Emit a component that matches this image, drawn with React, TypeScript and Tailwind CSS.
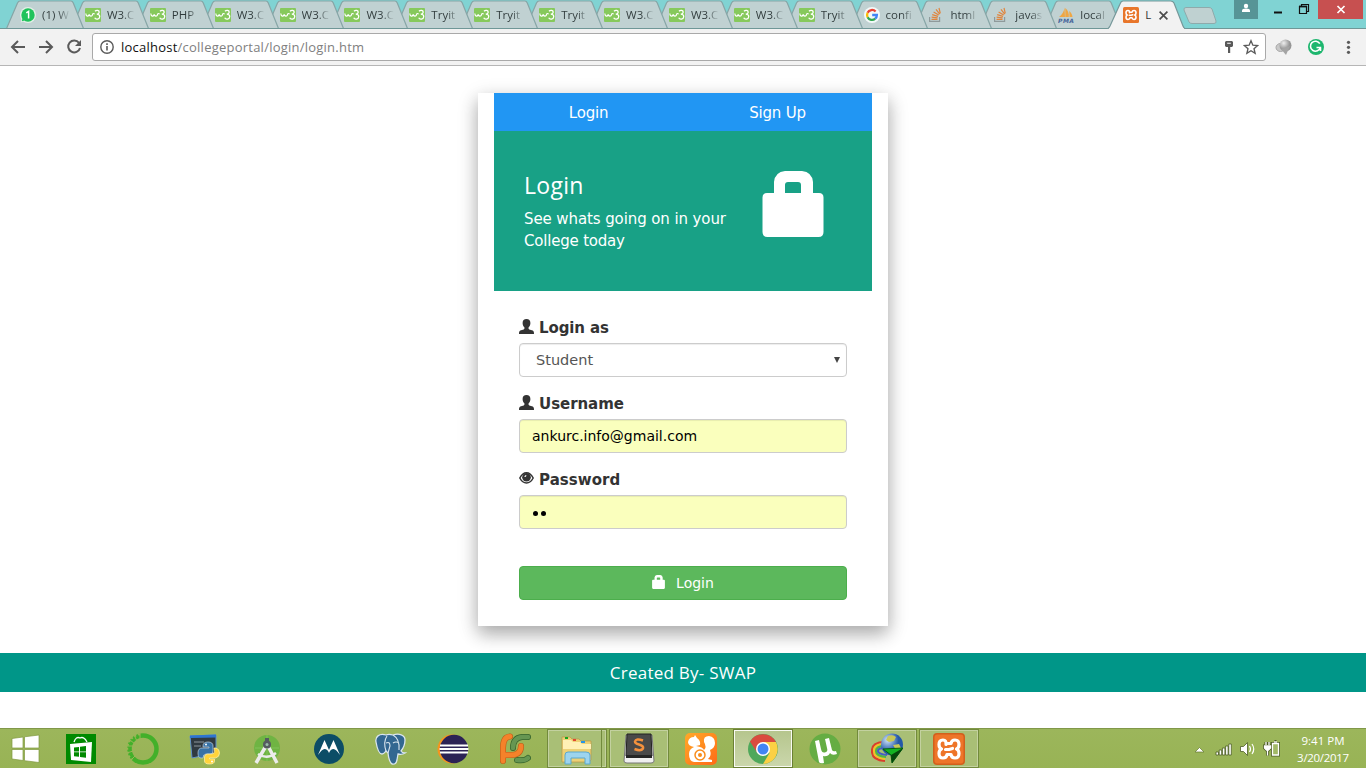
import React from "react";

type TabKind = "wa" | "w3" | "google" | "so" | "pma";

const tabs: { kind: TabKind; label: string }[] = [
  { kind: "wa", label: "(1) W" },
  { kind: "w3", label: "W3.C" },
  { kind: "w3", label: "PHP" },
  { kind: "w3", label: "W3.C" },
  { kind: "w3", label: "W3.C" },
  { kind: "w3", label: "W3.C" },
  { kind: "w3", label: "Tryit" },
  { kind: "w3", label: "Tryit" },
  { kind: "w3", label: "Tryit" },
  { kind: "w3", label: "W3.C" },
  { kind: "w3", label: "W3.C" },
  { kind: "w3", label: "W3.C" },
  { kind: "w3", label: "Tryit" },
  { kind: "google", label: "confi" },
  { kind: "so", label: "html" },
  { kind: "so", label: "javas" },
  { kind: "pma", label: "local" },
];

function Favicon({ kind }: { kind: TabKind }) {
  return (
    <svg viewBox="0 0 16 16" className="h-4 w-4 shrink-0">
      {kind === "wa" && (
        <>
          <circle cx="8" cy="8" r="8" fill="#e3f0e8" />
          <path d="M.6 15.4 2 11l3 3z" fill="#e3f0e8" />
          <circle cx="8" cy="8" r="6.7" fill="#20c35c" />
          <path d="M1.8 14.3 2.6 11l2 2.4z" fill="#20c35c" />
          <path d="M6.3 5.8 8.6 4.4V11.6" fill="none" stroke="#fff" strokeWidth="1.5" />
        </>
      )}
      {kind === "w3" && (
        <>
          <rect y="1" width="16" height="14" rx="1" fill="#86c95c" />
          <path
            d="M.8 6.500C1 9.800 3.700 9.800 4.200 7.500 4.800 9.800 7.400 9.500 7.600 7.200 8 6.200 9 6.300 9.500 7.200"
            fill="none"
            stroke="#fff"
            strokeWidth="1.200"
          />
          <path
            d="M10 4.300c1.500-1.600 4.300-1 4.200 1-.1 1.300-1.300 1.800-2.400 1.900 1.600 0 3 .8 2.900 2.500-.2 2.900-4 3.100-5 1"
            fill="none"
            stroke="#fff"
            strokeWidth="1.300"
          />
        </>
      )}
      {kind === "google" && (
        <>
          <circle cx="8" cy="8" r="8" fill="#f3f9f9" />
          <g fill="none" strokeWidth="2.300">
            <path d="M11.600 4.500A4.900 4.900 0 0 0 3.600 5.800" stroke="#ea4335" />
            <path d="M3.600 5.800a4.900 4.900 0 0 0 0 4.400" stroke="#fbbc05" />
            <path d="M3.600 10.200a4.900 4.900 0 0 0 7.600 1.500" stroke="#34a853" />
            <path d="M11.200 11.700A4.900 4.900 0 0 0 12.900 8H8.200" stroke="#4285f4" />
          </g>
        </>
      )}
      {kind === "so" && (
        <>
          <path d="M1.600 10v4.400h10V10" fill="none" stroke="#8f9a9b" strokeWidth="1.200" />
          <path
            d="M3.500 12.400h6M3.600 10.200l6 .7M4.200 7.600l5.800 1.700M5.600 4.900l5.100 3.200M8 2.300l3.700 4.800M11 1l1.300 5.400"
            fill="none"
            stroke="#e0853d"
            strokeWidth="1.200"
          />
        </>
      )}
      {kind === "pma" && (
        <>
          <path d="M6.500.5C6 4.500 4 8 1 10h6zM7.300 1c2.500 2 4 5.500 3.500 9H7.300zM11.300 4c1.800 1.500 3 3.500 3.200 6h-3z" fill="#efa643" />
          <text x="0" y="15.700" textLength="16" fontSize="6" fontWeight="bold" fontStyle="italic" fill="#46659a" className="font-['DejaVu_Sans',sans-serif]">
            PMA
          </text>
        </>
      )}
    </svg>
  );
}

function XamppMark() {
  return (
    <g fill="none" stroke="#fff" strokeWidth="3.200" strokeLinejoin="round" strokeLinecap="round">
      <path d="M13 11.500Q13.500 7 10 7 6 7 6 11.500 6 15 8.500 16 6 17 6 20.500 6 25 10 25 13.500 25 14 21.500H18Q18.500 25 22 25 26 25 26 20.500 26 17 23.500 16 26 15 26 11.500 26 7 22 7 18.500 7 18 10.500H13.500" />
      <path d="M12.500 16.500H16L19.500 15.500" />
    </g>
  );
}

function Tab({ kind, label, layer }: { kind: TabKind; label: string; layer: number }) {
  return (
    <div className="relative flex h-[29px] w-[64.9px] shrink-0 items-center" style={{ zIndex: layer }}>
      <svg viewBox="0 0 80 29" className="absolute left-[-14px] top-0 h-[29px] w-[80px]">
        <path d="M0.500 28.500 11.500 3Q12.500 1 14 1H65Q66.500 1 67.300 3L77.500 28.500" fill="#c0d1d2" stroke="#86a5a6" strokeWidth="1.200" />
      </svg>
      <div className="relative flex items-center gap-[6px] pt-px">
        <Favicon kind={kind} />
        <div className="w-[28px] whitespace-nowrap bg-linear-to-r from-[#2f3a3b] from-55% to-[#c0d1d2] bg-clip-text font-['Open_Sans',sans-serif] text-[11.500px] leading-4 text-transparent">
          {label}
        </div>
      </div>
    </div>
  );
}

function TabStrip() {
  return (
    <div className="relative z-0 flex h-[29px] bg-[#80d3d3] pl-5">
      {tabs.map((t, i) => (
        <Tab key={i} kind={t.kind} label={t.label} layer={tabs.length - i} />
      ))}
      <div className="absolute bottom-0 left-0 z-20 h-px w-full bg-[#6f9797]" />
      <div className="relative z-30 flex h-[29px] w-[61px] shrink-0 items-center">
        <svg viewBox="0 0 80 29" className="absolute left-[-16px] top-0 h-[29px] w-[80px]">
          <path d="M0 29.500Q2 28 3 26L13 4Q14 1 16 1H63.500Q66 1 67 3L76 26Q77 28.500 79 29.500" fill="#f2f2f2" stroke="#76989a" strokeWidth="1.200" />
          <path d="M2 29h75" stroke="#f2f2f2" strokeWidth="1.500" />
        </svg>
        <div className="relative flex items-center pt-px">
          <svg viewBox="0 0 32 32" className="h-4 w-4">
            <rect width="32" height="32" rx="3" fill="#e8762a" />
            <XamppMark />
          </svg>
          <span className="ml-[6px] w-[12px] font-['Open_Sans',sans-serif] text-[11.500px] leading-4 text-[#333]">L</span>
          <svg viewBox="0 0 8 8" className="ml-[2px] h-[9px] w-[9px]">
            <path d="M.5.5l7 7m0-7l-7 7" stroke="#4c4c4c" strokeWidth="1.500" />
          </svg>
        </div>
      </div>
      <svg viewBox="0 0 34 18" className="ml-[-1px] mt-[7px] h-[18px] w-[34px] shrink-0">
        <path d="M3 .5H26Q28 .5 29 2L33 14Q33.500 16.500 31 16.500H9Q7 16.500 6 15L1 3Q.5.500 3 .5z" fill="#bfd1d1" stroke="#8eaaab" />
      </svg>
      <div className="ml-auto flex h-[19px] shrink-0">
        <svg viewBox="0 0 24 19" className="h-[19px] w-[24px] bg-[#579496]">
          <circle cx="12" cy="6" r="2.200" fill="#fff" />
          <path d="M8 12v-1.500q0-2 4-2t4 2V12z" fill="#fff" />
        </svg>
        <svg viewBox="0 0 60 19" className="h-[19px] w-[60px]">
          <path d="M16 12.500h8" stroke="#111" strokeWidth="2" />
          <path d="M41.500 6.500h7v7h-7zM43.500 6V4.500h7v7H49" fill="none" stroke="#111" strokeWidth="1.200" />
          <path d="M41 6.500h8" stroke="#111" strokeWidth="1.800" />
        </svg>
        <svg viewBox="0 0 45 19" className="mr-[3px] h-[19px] w-[45px] bg-[#c75050]">
          <path d="M19.500 6l7 7m0-7l-7 7" stroke="#fff" strokeWidth="1.700" />
        </svg>
      </div>
    </div>
  );
}

function Toolbar() {
  return (
    <div className="flex h-[37px] items-center border-b border-[#b6b6b6] bg-[#f2f2f2]">
      <svg viewBox="0 0 92 36" className="h-9 w-[92px] shrink-0" fill="none" stroke="#5a5a5a" strokeWidth="2">
        <path d="M25 18H12.500M18 12l-6 6 6 6M39 18h12.500M46 12l6 6-6 6" />
        <path d="M79 13.800a6 6 0 1 0 1 5.200" />
        <path d="M81 11v6h-6z" fill="#5a5a5a" stroke="none" />
      </svg>
      <div className="flex h-[28px] w-[1174px] shrink-0 items-center rounded-[3px] border border-[#a9a9a9] bg-white pl-[7px] pr-[6px]">
        <svg viewBox="0 0 14 14" className="h-[14px] w-[14px]">
          <circle cx="7" cy="7" r="6.200" fill="none" stroke="#5a5a5a" strokeWidth="1.400" />
          <path d="M7 6v4.500M7 3.300V5" stroke="#5a5a5a" strokeWidth="1.600" />
        </svg>
        <span className="ml-[7px] whitespace-nowrap font-['Open_Sans',sans-serif] text-[13px] leading-5 tracking-[0.235px] text-[#808080]">
          <span className="text-[#111]">localhost</span>/collegeportal/login/login.htm
        </span>
        <svg viewBox="0 0 8 12" className="ml-auto h-[12px] w-[8px]">
          <path fillRule="evenodd" d="M1 0h6l1 1v4L7 6H5.200v6H3V6H1L0 5V1zM2.200 1.800v1h3.600v-1z" fill="#5a5a5a" />
        </svg>
        <svg viewBox="0 0 24 24" className="ml-[10px] h-[16px] w-[16px]">
          <path d="M12 2.500l2.800 6.700 7.200.6-5.500 4.700 1.700 7L12 17.700l-6.200 3.800 1.700-7L2 9.800l7.200-.6z" fill="none" stroke="#5a5a5a" strokeWidth="2" />
        </svg>
      </div>
      <svg viewBox="0 0 100 36" className="h-9 w-[100px] shrink-0">
        <defs>
          <radialGradient id="globe" cx=".35" cy=".3">
            <stop offset="0" stopColor="#eee" />
            <stop offset="1" stopColor="#969696" />
          </radialGradient>
        </defs>
        <ellipse cx="14.500" cy="18.500" rx="4.500" ry="4" fill="#c8c8c8" stroke="#a8a8a8" />
        <circle cx="19.500" cy="16.500" r="6" fill="url(#globe)" />
        <path d="M15 20l9-3-4 9z" fill="#a4a4a4" />
        <circle cx="50" cy="18" r="8" fill="#1db66e" />
        <path d="M53.800 14.700A5 5 0 1 0 54.300 18.500H50.500M54.500 18.500V22" fill="none" stroke="#fff" strokeWidth="1.600" />
        <g fill="#5a5a5a">
          <circle cx="82.500" cy="13.300" r="1.600" />
          <circle cx="82.500" cy="18.300" r="1.600" />
          <circle cx="82.500" cy="23.300" r="1.600" />
        </g>
      </svg>
    </div>
  );
}

function LockIcon({ className }: { className: string }) {
  return (
    <svg viewBox="0 0 62 66" className={className}>
      <path
        fillRule="evenodd"
        fill="#fff"
        d="M12 22V11Q13 1 23 0H40Q50 1 51 11V22H57Q61.500 22 61.500 26.500V61Q61.500 66 56.500 66H5.500Q.5 66 .5 61V26.500Q.5 22 5 22zM23 22H39V14Q39 11 36 11H26Q23 11 23 14z"
      />
    </svg>
  );
}

function UserIcon() {
  return (
    <svg viewBox="0 0 15 15" className="mb-[2px] h-[15px] w-[15px]">
      <path d="M7.500 0C10 0 11.400 1.600 11.400 4c0 1.800-.7 3.500-1.700 4.300-.4.800-.2 1.700.6 2.100l3.400 1.200c1 .5 1.300 1.400 1.300 3.400H0c0-2 .3-2.900 1.300-3.400l3.400-1.200c.8-.4 1-1.300.6-2.100C4.300 7.500 3.600 5.800 3.600 4 3.600 1.600 5 0 7.500 0z" fill="#333" />
    </svg>
  );
}

function EyeIcon() {
  return (
    <svg viewBox="0 0 15 12" className="mb-[2px] h-[12px] w-[15px]">
      <path d="M.8 6Q3.500.8 7.500.8T14.200 6Q11.500 11 7.500 11T.8 6z" fill="#fff" stroke="#333" strokeWidth="1.500" />
      <circle cx="7.500" cy="5.200" r="4.300" fill="#333" />
      <path d="M5.300 5Q5.600 3 7.400 3L7 4.800z" fill="#fff" />
    </svg>
  );
}

function Label({ icon, text }: { icon: React.ReactNode; text: React.ReactNode }) {
  return (
    <div className="mb-[5px] flex h-[22px] items-center gap-[5px] whitespace-nowrap font-['DejaVu_Sans',sans-serif] text-[15px] font-bold leading-[22px] text-[#333]">
      {icon}
      {text}
    </div>
  );
}

function LoginCard() {
  return (
    <div className="mx-auto mt-[27px] h-[533px] w-[410px] bg-white px-4 font-['DejaVu_Sans',sans-serif] text-[15px] shadow-[0_8px_16px_0_rgba(0,0,0,0.2),0_6px_20px_0_rgba(0,0,0,0.19)]">
      <div className="grid h-[38px] grid-cols-2 items-center bg-[#2196f3] pt-[2px] text-center leading-[22px] text-white">
        <span className="tracking-[-0.200px]">Login</span>
        <span className="tracking-[-0.200px]">Sign Up</span>
      </div>
      <div className="flex h-[160px] bg-[#18a186] px-[30px] pt-[40px] text-white">
        <div className="w-[238px]">
          <h3 className="mt-[-1px] whitespace-nowrap font-['Open_Sans',sans-serif] text-[23px] leading-[30px] tracking-[0.300px]">Login</h3>
          <p className="mt-[8px] whitespace-nowrap leading-[22px] tracking-[-0.100px]">
            See whats going on in your
            <br />
            <span className="tracking-[-0.200px]">College today</span>
          </p>
        </div>
        <LockIcon className="h-[66px] w-[62px] shrink-0" />
      </div>
      <div className="px-[25px] pt-[25px]">
        <Label icon={<UserIcon />} text={<span className="pt-[2px] tracking-[-0.100px]">Login as</span>} />
        <div className="mb-[15px] flex h-[34px] items-center justify-between rounded-[4px] border border-[#ccc] bg-white pl-4 pr-[6px] text-[#555] shadow-[inset_0_1px_1px_rgba(0,0,0,0.075)]">
          <span className="pt-[2px] text-[14.500px]">Student</span>
          <svg viewBox="0 0 6 6" className="h-[6px] w-[6px]">
            <path d="M0 0h6L3 6z" fill="#444" />
          </svg>
        </div>
        <Label icon={<UserIcon />} text={<span className="pt-[2px] tracking-[-0.050px]">Username</span>} />
        <div className="mb-[15px] flex h-[34px] items-center rounded-[4px] border border-[#ccc] bg-[#faffbd] px-3 pt-[1px] text-[14px] text-black shadow-[inset_0_1px_1px_rgba(0,0,0,0.075)]">
          ankurc.info@gmail.com
        </div>
        <Label icon={<EyeIcon />} text={<span className="pt-[2px] tracking-[0.050px]">Password</span>} />
        <div className="flex h-[34px] items-center gap-[3px] rounded-[4px] border border-[#ccc] bg-[#faffbd] pl-[13px] pt-[3px] shadow-[inset_0_1px_1px_rgba(0,0,0,0.075)]">
          <span className="h-[5px] w-[5px] rounded-full bg-black" />
          <span className="h-[5px] w-[5px] rounded-full bg-black" />
        </div>
        <div className="mt-[37px] flex h-[34px] items-center justify-center gap-[11px] rounded-[4px] border border-[#4cae4c] bg-[#5cb85c] text-[14px] text-white">
          <LockIcon className="mb-[2px] h-[14px] w-[13px]" />
          Login
        </div>
      </div>
    </div>
  );
}

const taskIcons: { box?: "normal" | "active" | "stack"; art: React.ReactNode }[] = [
  {
    art: (
      <>
        <rect x="1" y="1" width="30" height="30" fill="#008a00" />
        <path d="M9 9Q11 3 15 5Q19 3 22 9" fill="none" stroke="#fff" strokeWidth="1.300" />
        <path d="M5 11l22-2-1 20-20-2z" fill="#fff" />
        <path d="M9 14.500l5-.6v4.500H9zM15 13.800l6-.8v5.400h-6zM9 19.300h5v4.500l-5-.6zM15 19.300h6v5.500l-6-.8z" fill="#008a00" />
      </>
    ),
  },
  {
    art: (
      <>
        <circle cx="16" cy="16" r="13.500" fill="none" stroke="#43b02a" strokeWidth="4.500" />
        <path d="M13 0v6M7 2l3 6M3 7l5 4M0 13h6M0 20l6-2M4 27l5-5" stroke="#9ab558" strokeWidth="1" />
        <path d="M13 1.200A15 15 0 0 0 5 27" fill="none" stroke="#9ab558" strokeWidth="2" strokeDasharray="2 2" />
      </>
    ),
  },
  {
    art: (
      <>
        <path d="M1 3l26-1v18L3 25z" fill="#303a40" stroke="#6092cb" />
        <path d="M1 2.500l26-1v3L1 5z" fill="#2e75d0" />
        <path d="M5 9h10M5 13h7" stroke="#8d959a" />
        <path d="M14 13q0-4 5-4t5 4v5q0 3-3 3h-4q-3 0-3 4h-2q-3 0-3-5t4-5h7v-1h-6z" fill="#3872a5" stroke="#bfd0df" strokeWidth=".7" />
        <path d="M25 15h2q3.500 1 3.500 5t-4 5h-6v1h5v2q0 3-5 3t-5-3v-4q0-3 3-3h4q3 0 3-3z" fill="#ffd43b" stroke="#fff2b0" strokeWidth=".7" />
        <circle cx="17" cy="11.500" r="1" fill="#fff" />
        <circle cx="23" cy="28.500" r="1" fill="#fff" />
      </>
    ),
  },
  {
    art: (
      <>
        <circle cx="16" cy="15" r="13" fill="#6fb443" />
        <path d="M4 15h24M16 2v26" stroke="#82c25a" />
        <path d="M15 13L5 30M17 13l9 17" stroke="#ececec" strokeWidth="3.500" />
        <path d="M7 21q9 6 18-1" fill="none" stroke="#ececec" strokeWidth="2.500" />
        <path d="M14 5h4v6h-4z" fill="#555b60" />
        <circle cx="16" cy="11.500" r="4" fill="#555b60" />
        <circle cx="16" cy="11.500" r="1.500" fill="#9ba" />
      </>
    ),
  },
  {
    art: (
      <>
        <circle cx="16" cy="16" r="15" fill="#0c4d66" />
        <path d="M5 22L11.500 7 16 17 20.500 7 27 22q-4-6-6.500-6-3 0-4.500 4-1.500-4-4.500-4Q9 16 5 22z" fill="#fff" />
      </>
    ),
  },
  {
    art: (
      <>
        <path
          d="M11 2C4 0 0 4 1 9c1 6 3 12 6 12 2 0 3-2 4-3l2 2q1 9 4 11 4 1 5-4l1-6q4 1 7-1-3 0-4-2 4-5 4-11c0-5-6-7-12-5-3-1-5-1-7 0z"
          fill="#336791"
          stroke="#d9e5ee"
          strokeWidth="1.300"
        />
        <path d="M12 3q-4 6-1 15M18 2q7 4 6 15M11 10q4-2 4 3l-2 7M18 10q3-2 6 0" fill="none" stroke="#d9e5ee" strokeWidth="1.100" />
      </>
    ),
  },
  {
    art: (
      <>
        <circle cx="15" cy="16" r="14.500" fill="#f7941e" />
        <circle cx="17" cy="16" r="14.200" fill="#2c2255" />
        <path d="M3 12.500h28M2.500 16h29M3 19.500h28" stroke="#fff" strokeWidth="1.900" />
      </>
    ),
  },
  {
    art: (
      <>
        <g fill="none" strokeLinecap="round">
          <path d="M29 4H23Q14 5 14 15" stroke="#37652d" strokeWidth="6" />
          <path d="M29 4H23Q14 5 14 15" stroke="#669652" strokeWidth="4.500" />
          <path d="M29 25Q26 28 18 27" stroke="#37652d" strokeWidth="6" />
          <path d="M29 25Q26 28 18 27" stroke="#669652" strokeWidth="4.500" />
          <path d="M4 28V15Q4 4 11 3.500M4 22H12Q22 22 22 13" stroke="#bd5d18" strokeWidth="6" />
          <path d="M4 28V15Q4 4 11 3.500M4 22H12Q22 22 22 13" stroke="#f5822a" strokeWidth="4.800" />
        </g>
      </>
    ),
  },
  {
    box: "stack",
    art: (
      <>
        <path d="M1 4h8l2 2h7l2 2h10v19l-2 2H1z" fill="#edd176" stroke="#b99747" strokeWidth=".7" />
        <path d="M2 7h8l2 2h7l2 2h9v5H2z" fill="#fff0b5" />
        <path d="M4 5h3" stroke="#16a51d" strokeWidth="2" />
        <path d="M12 7h3" stroke="#e34732" strokeWidth="2" />
        <path d="M20 9h4" stroke="#2695e8" strokeWidth="2" />
        <path d="M4 31V22q0-3 3-3h18q4 0 4 3v9h-5v-6H10v6z" fill="#9dd4ee" stroke="#5ba8cd" />
      </>
    ),
  },
  {
    box: "normal",
    art: (
      <>
        <path d="M3 2h26l2 26q0 2-3 2H4q-3 0-3-2z" fill="#efefef" stroke="#777" />
        <path d="M4 1h24l1 22H3z" fill="#494949" stroke="#222" />
        <path d="M3 22h26v3H3z" fill="#252525" />
        <path d="M20 7.500q-7-2.500-8 1 0 2 4 3 5 1.500 4 4-2 3-8.500.5" fill="none" stroke="#f4913d" strokeWidth="2.500" />
      </>
    ),
  },
  {
    art: (
      <>
        <rect x="0" y="0" width="32" height="32" rx="5" fill="url(#uc)" />
        <path d="M3 9Q4 4 9 4l1-2 2 3q4 3 3 7l-4 1q7 1 8 4 3-3 0-8-1-6 5-6 6 1 6 7 0 5-5 7 2 6-2 9l4 1v2H9q-5-1-5-8 0-5 5-7Q3 13 3 9z" fill="#fff" />
        <circle cx="15" cy="22" r="5" fill="none" stroke="#f98d1c" strokeWidth="1.500" />
        <circle cx="15" cy="22" r="2" fill="#f98d1c" />
      </>
    ),
  },
  {
    box: "active",
    art: (
      <>
        <circle cx="16" cy="16" r="15" fill="#4fa85b" />
        <path d="M16 16L3 8.500A15 15 0 0 1 29 9H16z" fill="#da4b3f" />
        <path d="M3 8.500l7 11L16 9.500z" fill="#da4b3f" />
        <path d="M16 9h13a15 15 0 0 1-13 22l6.500-11z" fill="#fbd044" />
        <circle cx="16" cy="16" r="7" fill="#fff" />
        <circle cx="16" cy="16" r="5.500" fill="#4285f4" />
      </>
    ),
  },
  {
    art: (
      <>
        <circle cx="16" cy="16" r="15.500" fill="#65ad43" />
        <path d="M6 8l4-1 2 9q1 5 5 3 2-1 1-4L16 6l4-1 3 12q1 2 4 1l1 3q-5 2-7-1-2 4-7 3l1 7q-4 1-5-1z" fill="#fff" />
      </>
    ),
  },
  {
    box: "normal",
    art: (
      <>
        <g fill="none" strokeWidth="2.200">
          <path d="M14 9Q1 9 1 18t13 10" stroke="#d93f2c" />
          <path d="M14 11Q3 11 3 18t11 8" stroke="#f4bf27" />
          <path d="M14 13Q5 13 5 18t10 6" stroke="#50b840" />
          <path d="M14 15Q7 15 7 18t9 4" stroke="#465fc4" />
        </g>
        <circle cx="21" cy="11.500" r="11" fill="url(#earth)" />
        <path d="M17 3q5-2 8 1l-2 4-5 1-3-2zM22 12l6-1 2 4-4 4z" fill="#c8c858" />
        <path d="M12 16l20-1-11 15-1-8z" fill="#15b322" stroke="#075f10" />
        <path d="M20 22l12-7-11 15z" fill="#07470c" />
      </>
    ),
  },
  {
    box: "normal",
    art: (
      <>
        <rect width="32" height="32" rx="4" fill="#d2601d" />
        <rect x="1.500" y="1.500" width="29" height="29" rx="3" fill="#ee7529" />
        <XamppMark />
      </>
    ),
  },
];

function Taskbar() {
  return (
    <div className="mt-[36px] flex h-10 shrink-0 items-center border-t border-[#819849] bg-linear-to-b from-[#9cb65b] to-[#98b355]">
      <svg viewBox="0 0 50 39" className="h-[39px] w-[51px] shrink-0">
        <path d="M11.500 9.500L22.500 8v11h-11zM24 7.800L38.500 6v13H24zM11.500 20.500h11v11l-11-1.500zM24 20.500h14.500v13L24 31.700z" fill="#fff" stroke="#7f983f" strokeWidth=".7" />
      </svg>
      {taskIcons.map((t, i) => (
        <div key={i} className="flex h-[39px] w-[62px] shrink-0 items-center">
          <div
            className={
              t.box === "active"
                ? "flex h-[39px] w-[60px] items-center justify-center border border-[#6b8035] bg-linear-to-b from-[#b5c58c] to-[#cbd7ac] shadow-[inset_0_0_0_1px_#f8faf2]"
                : t.box
                  ? "flex h-[39px] w-[60px] items-center justify-center border border-[#728a3c] bg-[#a9bf76] shadow-[inset_0_0_0_1px_#c3d19f]"
                  : "flex h-[39px] w-[60px] items-center justify-center"
            }
          >
            <svg viewBox="0 0 32 32" className={t.box === "stack" ? "ml-[2px] mr-[8px] h-8 w-8" : "h-8 w-8"}>
              <defs>
                <linearGradient id="uc" x1="0" y1="0" x2="1" y2="1">
                  <stop offset="0" stopColor="#ffa928" />
                  <stop offset="1" stopColor="#ff6a17" />
                </linearGradient>
                <radialGradient id="earth" cx=".3" cy=".3">
                  <stop offset="0" stopColor="#d0e4fa" />
                  <stop offset="1" stopColor="#2458a8" />
                </radialGradient>
              </defs>
              {t.art}
            </svg>
            {t.box === "stack" && <span className="mr-[-6px] h-[37px] w-px bg-[#728a3c]" />}
          </div>
        </div>
      ))}
      <svg viewBox="0 0 90 39" className="ml-auto h-[39px] w-[90px] shrink-0">
        <g transform="translate(-2 0)">
          <path d="M5 23l4.500-4.500L14 23z" fill="#fff" stroke="#657a32" strokeWidth=".7" />
          <g fill="#fff" stroke="#4d5d25" strokeWidth=".8">
            <path d="M26 23h2.500v3H26zM29.200 21h2.500v5h-2.500zM32.400 19h2.500v7h-2.500zM35.600 17h2.500v9h-2.500zM38.800 15h2.500v11h-2.500z" />
            <path d="M50.500 17.500h3l4-4v13l-4-4h-3z" />
          </g>
          <g fill="none" stroke="#fff" strokeWidth="1.200">
            <path d="M59.500 17q2 3 0 6M62 15q3.500 5 0 10" />
          </g>
          <g fill="none" stroke="#4d5d25" strokeWidth="3">
            <path d="M82.500 14.500h6v11.500h-6zM84.500 12.500h2" />
            <path d="M76 13v3m3-3v3M74.500 17h6v2l-2 2h-2l-2-2zM77.500 20v6.500" />
          </g>
          <g stroke="#fff" strokeWidth="1.300">
            <path d="M82.500 14.500h6v11.500h-6z" fill="#a2b966" />
            <path d="M84 13h3" />
            <path d="M76 13v3m3-3v3M74.500 17h6v2l-2 2h-2l-2-2zM77.500 20v6.500" fill="#fff" />
          </g>
        </g>
      </svg>
      <div className="ml-[9px] mr-[11px] w-[64px] shrink-0 text-center font-['Open_Sans',sans-serif] text-[11.500px] leading-[17px] text-white">
        <div>9:41 PM</div>
        <div className="-mx-2 whitespace-nowrap tracking-[-0.300px]">3/20/2017</div>
      </div>
    </div>
  );
}

export default function App() {
  return (
    <div className="flex h-[768px] w-[1366px] flex-col overflow-hidden bg-white">
      <TabStrip />
      <Toolbar />
      <LoginCard />
      <div className="mt-[27px] flex h-[39px] items-center justify-center bg-[#009688] font-['Open_Sans',sans-serif] text-[17px] text-white">
        <span className="whitespace-nowrap tracking-[0.250px]">Created By- SWAP</span>
      </div>
      <Taskbar />
    </div>
  );
}
